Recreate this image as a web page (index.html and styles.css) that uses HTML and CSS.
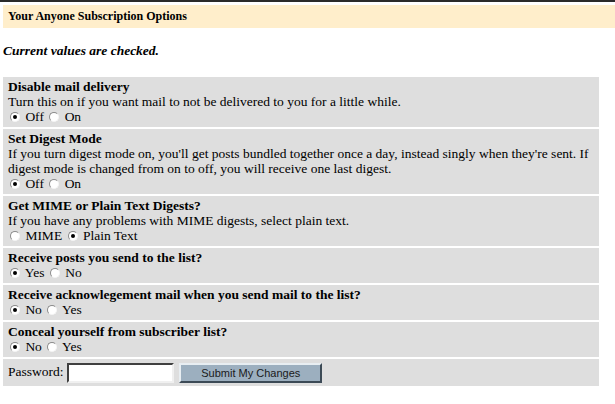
FILE: index.html
```html
<!DOCTYPE html>
<html lang="en">
<head>
    <meta charset="UTF-8">
    <title>Your Anyone Subscription Options</title>
    <link rel="stylesheet" href="styles.css">
</head>
<body>
    <div class="topline"></div>
    <div class="header">Your Anyone Subscription Options</div>
    <p class="note">Current values are checked.</p>
    <form class="options">
        <div class="row">
            <b>Disable mail delivery</b><br>
            Turn this on if you want mail to not be delivered to you for a little while.<br>
            <label><input type="radio" name="disable" checked> Off</label>
            <label><input type="radio" name="disable"> On</label>
        </div>
        <div class="row">
            <b>Set Digest Mode</b><br>
            If you turn digest mode on, you'll get posts bundled together once a day, instead singly when they're sent. If digest mode is changed from on to off, you will receive one last digest.<br>
            <label><input type="radio" name="digest" checked> Off</label>
            <label><input type="radio" name="digest"> On</label>
        </div>
        <div class="row">
            <b>Get MIME or Plain Text Digests?</b><br>
            If you have any problems with MIME digests, select plain text.<br>
            <label><input type="radio" name="mime"> MIME</label>
            <label><input type="radio" name="mime" checked> Plain Text</label>
        </div>
        <div class="row">
            <b>Receive posts you send to the list?</b><br>
            <label><input type="radio" name="dontreceive" checked> Yes</label>
            <label><input type="radio" name="dontreceive"> No</label>
        </div>
        <div class="row">
            <b>Receive acknowlegement mail when you send mail to the list?</b><br>
            <label><input type="radio" name="ack" checked> No</label>
            <label><input type="radio" name="ack"> Yes</label>
        </div>
        <div class="row">
            <b>Conceal yourself from subscriber list?</b><br>
            <label><input type="radio" name="conceal" checked> No</label>
            <label><input type="radio" name="conceal"> Yes</label>
        </div>
        <div class="row submit-row">
            Password: <input type="password" class="pw">
            <button type="button" class="submit">Submit My Changes</button>
        </div>
    </form>
</body>
</html>
```

FILE: styles.css
```css
body {
    margin: 0;
    font-family: "Liberation Serif", "Times New Roman", serif;
    font-size: 13.5px;
    line-height: 15px;
    color: #000;
    background: #fff;
}
.topline {
    height: 2px;
    background: #2a2a2a;
}
.header {
    margin: 3px 0 0 3px;
    height: 23px;
    line-height: 23px;
    padding-left: 5px;
    background: #ffeecb;
    font-size: 12px;
    font-weight: bold;
}
.note {
    margin: 15px 3px 0;
    font-weight: bold;
    font-style: italic;
}
.options {
    width: 596px;
    margin: 19px 0 0 3px;
    display: flex;
    flex-direction: column;
    gap: 2px;
}
.row {
    background: #dedede;
    padding: 2px 5px;
}
label {
    white-space: nowrap;
    line-height: 16px;
}
input[type="radio"] {
    appearance: none;
    -webkit-appearance: none;
    width: 10px;
    height: 10px;
    margin: 0 2px 0 2px;
    border: 1px solid #8a8a8a;
    border-right-color: #f4f4f4;
    border-bottom-color: #f4f4f4;
    border-radius: 50%;
    background: #fff;
    vertical-align: -1px;
    position: relative;
}
input[type="radio"]:checked::after {
    content: "";
    position: absolute;
    left: 2px;
    top: 2px;
    width: 4px;
    height: 4px;
    border-radius: 50%;
    background: #000;
}
.submit-row {
    padding: 4px 5px 3px;
    line-height: 18px;
}
.pw {
    width: 103px;
    height: 16px;
    padding: 0;
    margin: 0 2px 0 0;
    border: 2px solid #fff;
    border-top-color: #404040;
    border-left-color: #404040;
    border-bottom-color: #f0f0f0;
    border-right-color: #f0f0f0;
    background: #fff;
    vertical-align: middle;
}
.submit {
    width: 143px;
    height: 20px;
    padding: 0;
    border: 2px solid;
    border-color: #e8eef2 #3c4a56 #3c4a56 #e8eef2;
    background: #9cafbf;
    font-family: "Liberation Sans", Arial, sans-serif;
    font-size: 11px;
    color: #1a1a1a;
    vertical-align: middle;
}
```
